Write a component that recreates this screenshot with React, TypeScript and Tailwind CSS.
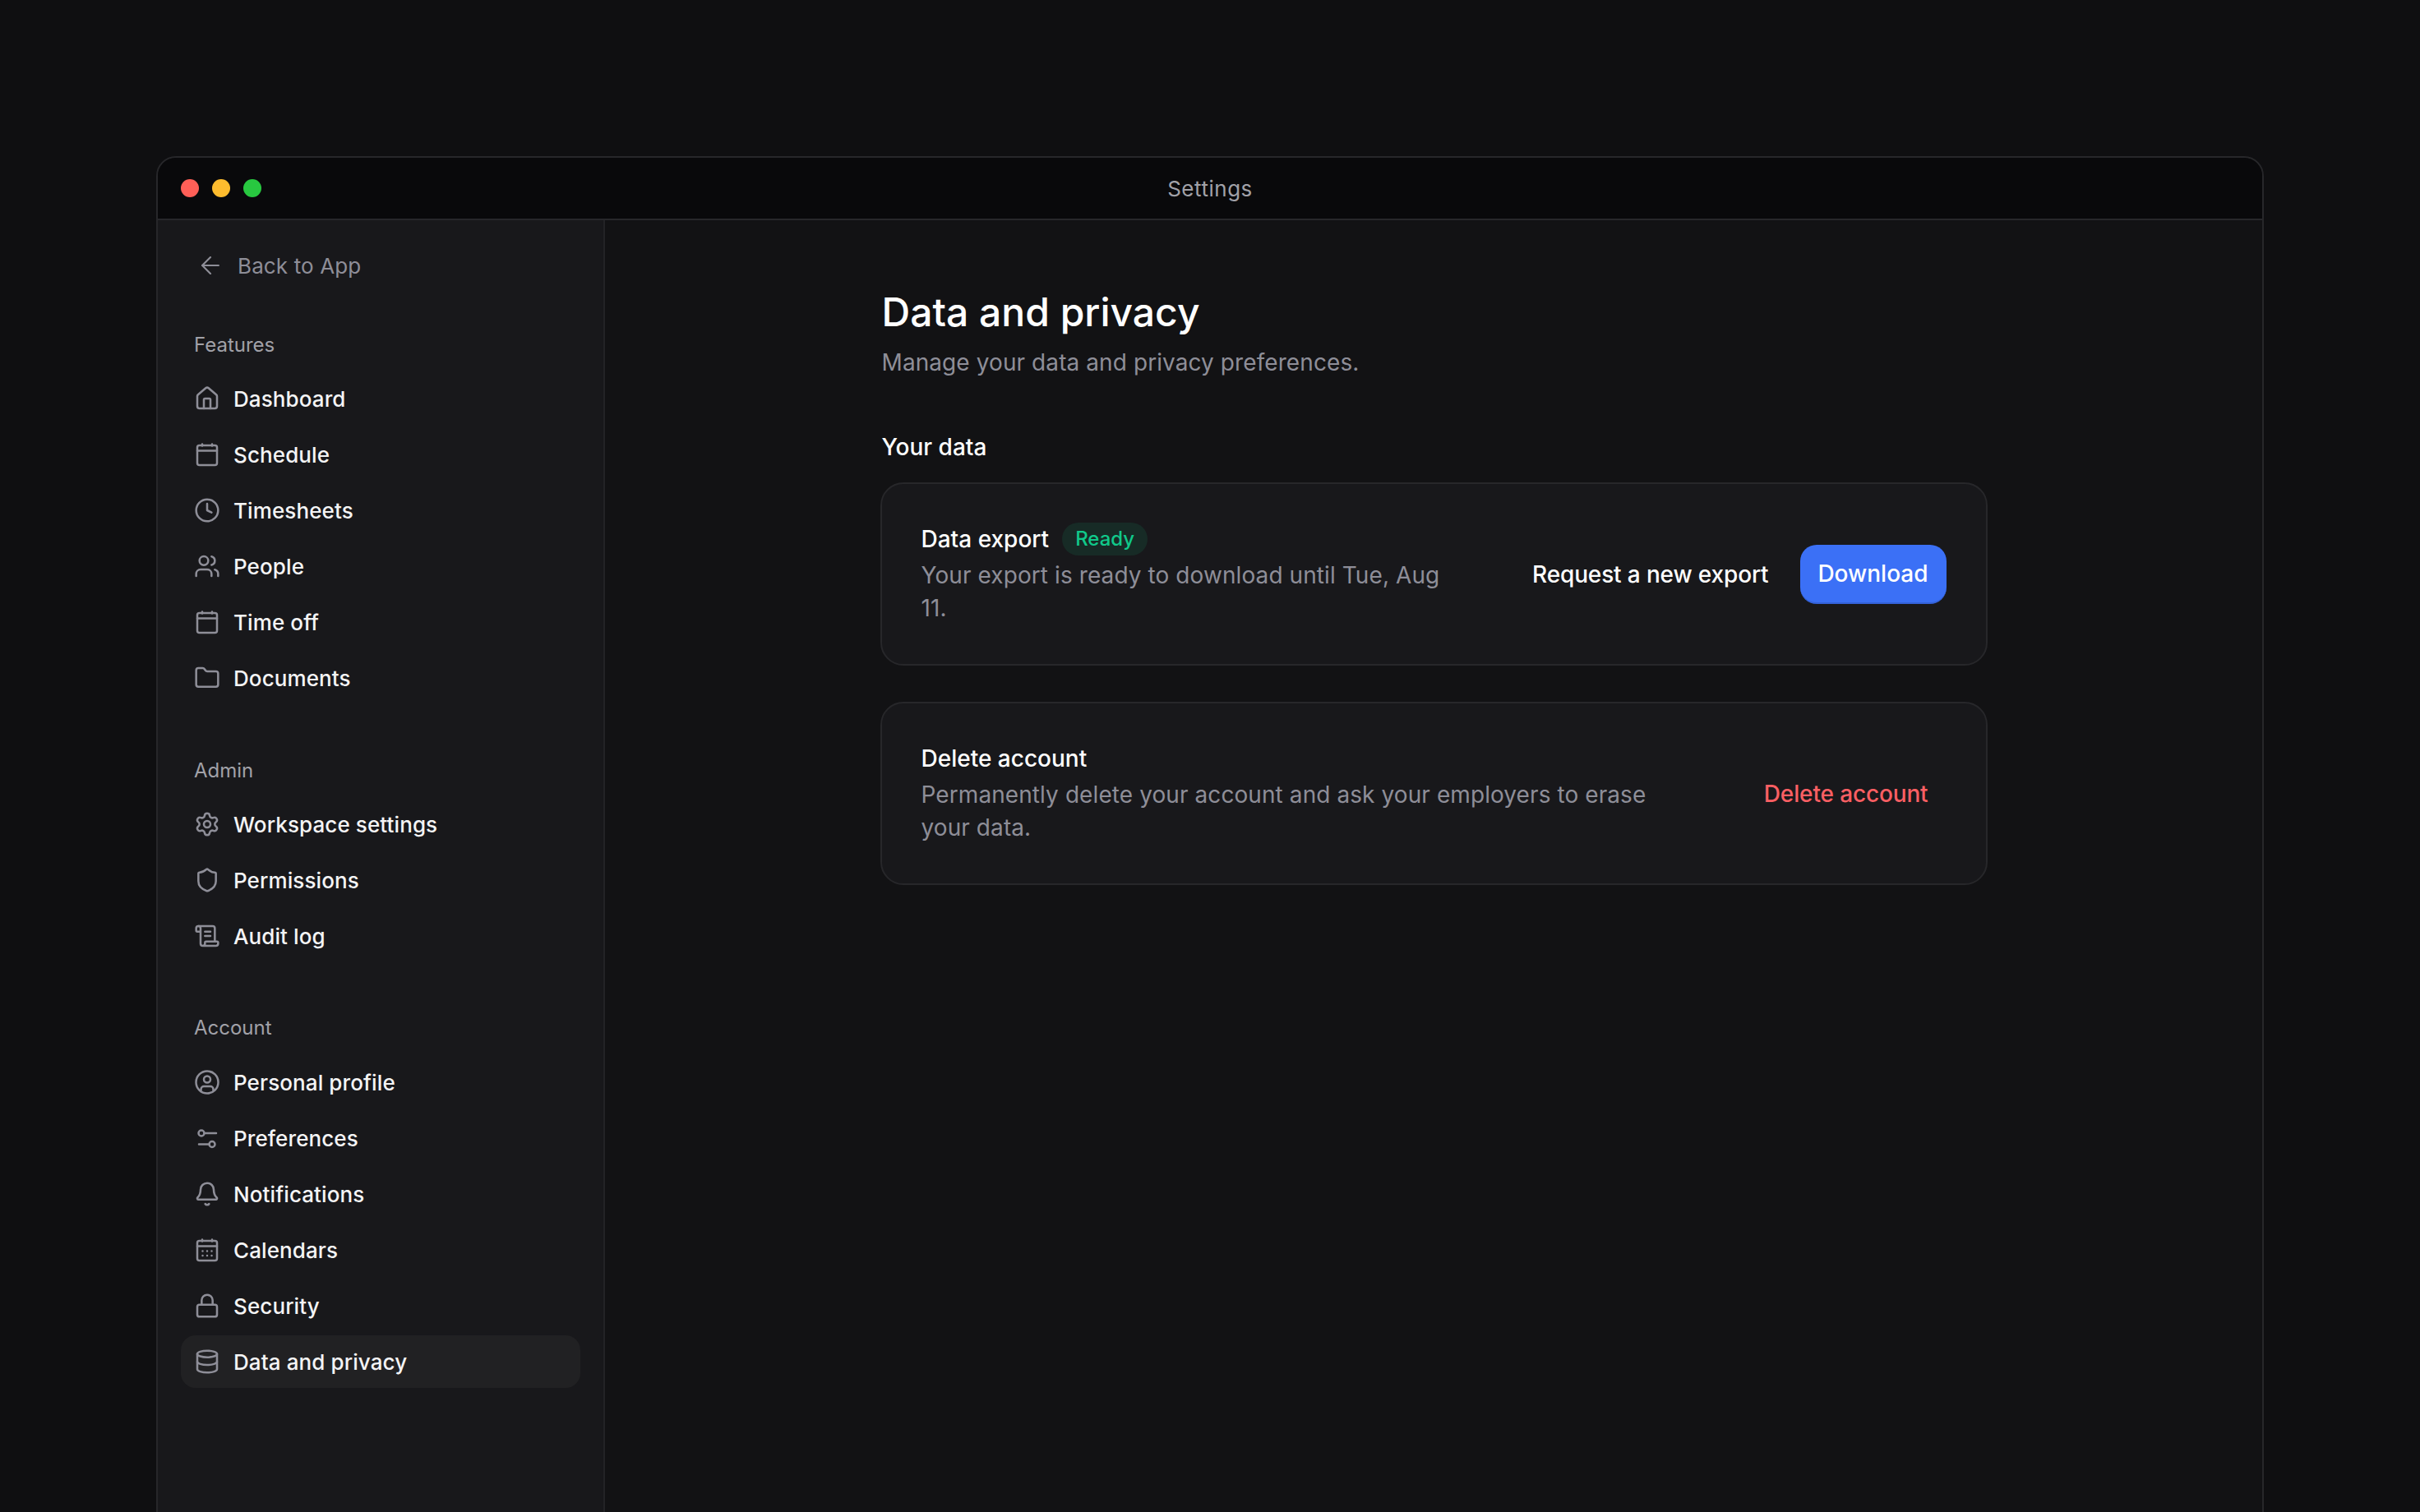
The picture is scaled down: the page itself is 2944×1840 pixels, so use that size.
import React from "react";
import { ArrowLeft, House, Clock, Users, Folder, Settings, Shield, ScrollText, Bell, Lock, Database } from "lucide-react";

const cls = "w-[32px] h-[32px] shrink-0 text-[#8e8e98]";
const Cal = ({ dots }: { dots?: boolean }) => (
  <svg viewBox="0 0 32 32" className={cls} fill="none" stroke="currentColor" strokeWidth="2.5" strokeLinecap="round" strokeLinejoin="round">
    <rect x="4" y="5" width="24" height="24" rx="2.5" />
    <path d="M4 11.5h24M10 3.5v2M22 3.5v2" />
    {dots && <path d="M10.5 17.5h.01M16 17.5h.01M21.5 17.5h.01M10.5 23h.01M16 23h.01M21.5 23h.01" />}
  </svg>
);
const Profile = () => (
  <svg viewBox="0 0 32 32" className={cls} fill="none" stroke="currentColor" strokeWidth="2.5" strokeLinecap="round" strokeLinejoin="round">
    <circle cx="16" cy="16" r="13.5" />
    <circle cx="16" cy="12.5" r="4" />
    <path d="M8.5 26v-1.5a3.5 3.5 0 0 1 3.5-3.5h8a3.5 3.5 0 0 1 3.5 3.5V26" />
  </svg>
);
const Prefs = () => (
  <svg viewBox="0 0 32 32" className={cls} fill="none" stroke="currentColor" strokeWidth="2.5" strokeLinecap="round" strokeLinejoin="round">
    <circle cx="9" cy="10" r="3.5" />
    <path d="M12.5 10H27M6 23.5h12.5" />
    <circle cx="22" cy="23.5" r="3.5" />
  </svg>
);
const ic = { className: cls, strokeWidth: 1.9 };

type Item = { label: string; icon: React.ReactNode; active?: boolean };
const Row = ({ label, icon, active }: Item) => (
  <div className={`h-[64px] flex items-center gap-[16px] px-[16px] rounded-[18px] ${active ? "bg-[#212123]" : ""}`}>
    {icon}
    <span className="text-[#f4f4f5] text-[26px] font-[450] tracking-[0.004em]">{label}</span>
  </div>
);
const Section = ({ title, items, cn, labelCn }: { title: string; items: Item[]; cn: string; labelCn: string }) => (
  <div className={cn}>
    <div className={`h-[32px] flex items-center px-[16px] text-[24px] text-[#a1a1a8] font-normal leading-none ${labelCn}`}>{title}</div>
    <div className="flex flex-col gap-[4px]">
      {items.map((i) => <Row key={i.label} {...i} />)}
    </div>
  </div>
);

export default function App() {
  return (
    <div className="min-h-screen h-[1840px] overflow-hidden bg-[#0f0f11] pt-[190px] px-[190px] font-['Inter',sans-serif]">
      <div className="w-[2564px] h-[1700px] rounded-t-[24px] border-2 border-[#27272a] bg-[#121214] flex flex-col overflow-hidden">
        <div className="h-[76px] shrink-0 bg-[#09090b] border-b-2 border-[#27272a] flex items-center relative">
          <div className="flex gap-[16px] pl-[28px]">
            <div className="w-[22px] h-[22px] rounded-full bg-[#ff5f57]" />
            <div className="w-[22px] h-[22px] rounded-full bg-[#febc2e]" />
            <div className="w-[22px] h-[22px] rounded-full bg-[#28c840]" />
          </div>
          <div className="absolute inset-0 flex items-center justify-center text-[26px] tracking-[0.02em] text-[#a1a1a8]">Settings</div>
        </div>
        <div className="flex flex-1 min-h-0">
          <aside className="w-[544px] shrink-0 bg-[#18181b] border-r-2 border-[#232326] px-[28px] pt-[36px]">
            <div className="h-[38px] flex items-center gap-[16px] pl-[19px] text-[26px] tracking-[0.005em] text-[#8e8e98]">
              <ArrowLeft className="w-[34px] h-[34px]" strokeWidth={1.5} />
              <span>Back to App</span>
            </div>
            <Section cn="mt-[62px]" labelCn="mb-[17px]" title="Features" items={[
              { label: "Dashboard", icon: <House {...ic} /> },
              { label: "Schedule", icon: <Cal /> },
              { label: "Timesheets", icon: <Clock {...ic} /> },
              { label: "People", icon: <Users {...ic} /> },
              { label: "Time off", icon: <Cal /> },
              { label: "Documents", icon: <Folder {...ic} /> },
            ]} />
            <Section cn="mt-[65px]" labelCn="mb-[17px]" title="Admin" items={[
              { label: "Workspace settings", icon: <Settings {...ic} /> },
              { label: "Permissions", icon: <Shield {...ic} /> },
              { label: "Audit log", icon: <ScrollText {...ic} /> },
            ]} />
            <Section cn="mt-[64px]" labelCn="mb-[18px]" title="Account" items={[
              { label: "Personal profile", icon: <Profile /> },
              { label: "Preferences", icon: <Prefs /> },
              { label: "Notifications", icon: <Bell {...ic} /> },
              { label: "Calendars", icon: <Cal dots /> },
              { label: "Security", icon: <Lock {...ic} /> },
              { label: "Data and privacy", icon: <Database {...ic} />, active: true },
            ]} />
          </aside>
          <main className="flex-1 flex justify-center pt-[81px]">
            <div className="w-[1347px]">
              <h1 className="pl-[2px] text-[48px] leading-[62px] text-white font-medium">Data and privacy</h1>
              <p className="pl-[2px] mt-[10px] text-[28px] leading-[40px] tracking-[0.003em] text-[#8e8e98]">Manage your data and privacy preferences.</p>
              <h2 className="pl-[2px] mt-[63px] text-[28px] leading-[40px] text-white font-[450]">Your data</h2>
              <div className="mt-[23px] flex flex-col gap-[44px]">
                <div className="h-[223px] rounded-[28px] border-2 border-[#27272a] bg-[#18181b] px-[48px] flex items-center gap-[64px]">
                  <div className="flex-1 pb-[2px]">
                    <div className="flex items-center gap-[16px] h-[40px]">
                      <span className="text-[28px] text-white font-[450]">Data export</span>
                      <span className="h-[40px] px-[16px] rounded-full bg-[#172b26] text-[#10c98a] text-[24px] font-[450] flex items-center">Ready</span>
                    </div>
                    <p className="mt-[4px] text-[28px] leading-[40px] tracking-[0.003em] text-[#8e8e98]">Your export is ready to download until Tue, Aug 11.</p>
                  </div>
                  <div className="flex items-center gap-[16px] shrink-0">
                    <button className="h-[72px] px-[22px] text-[28px] tracking-[-0.005em] text-white font-[450]">Request a new export</button>
                    <button className="h-[72px] w-[178px] rounded-[20px] bg-[#3b70f6] border-b-2 border-[#3462d8] text-[28px] text-white font-[450]">Download</button>
                  </div>
                </div>
                <div className="h-[223px] rounded-[28px] border-2 border-[#27272a] bg-[#18181b] px-[48px] flex items-center gap-[64px]">
                  <div className="flex-1 pb-[2px]">
                    <div className="flex items-center h-[40px]">
                      <span className="text-[28px] text-white font-[450]">Delete account</span>
                    </div>
                    <p className="mt-[4px] text-[28px] leading-[40px] tracking-[0.003em] text-[#8e8e98]">Permanently delete your account and ask your employers to erase your data.</p>
                  </div>
                  <button className="shrink-0 h-[72px] px-[22px] text-[28px] tracking-[-0.005em] text-[#fb5f63] font-[450]">Delete account</button>
                </div>
              </div>
            </div>
          </main>
        </div>
      </div>
    </div>
  );
}
